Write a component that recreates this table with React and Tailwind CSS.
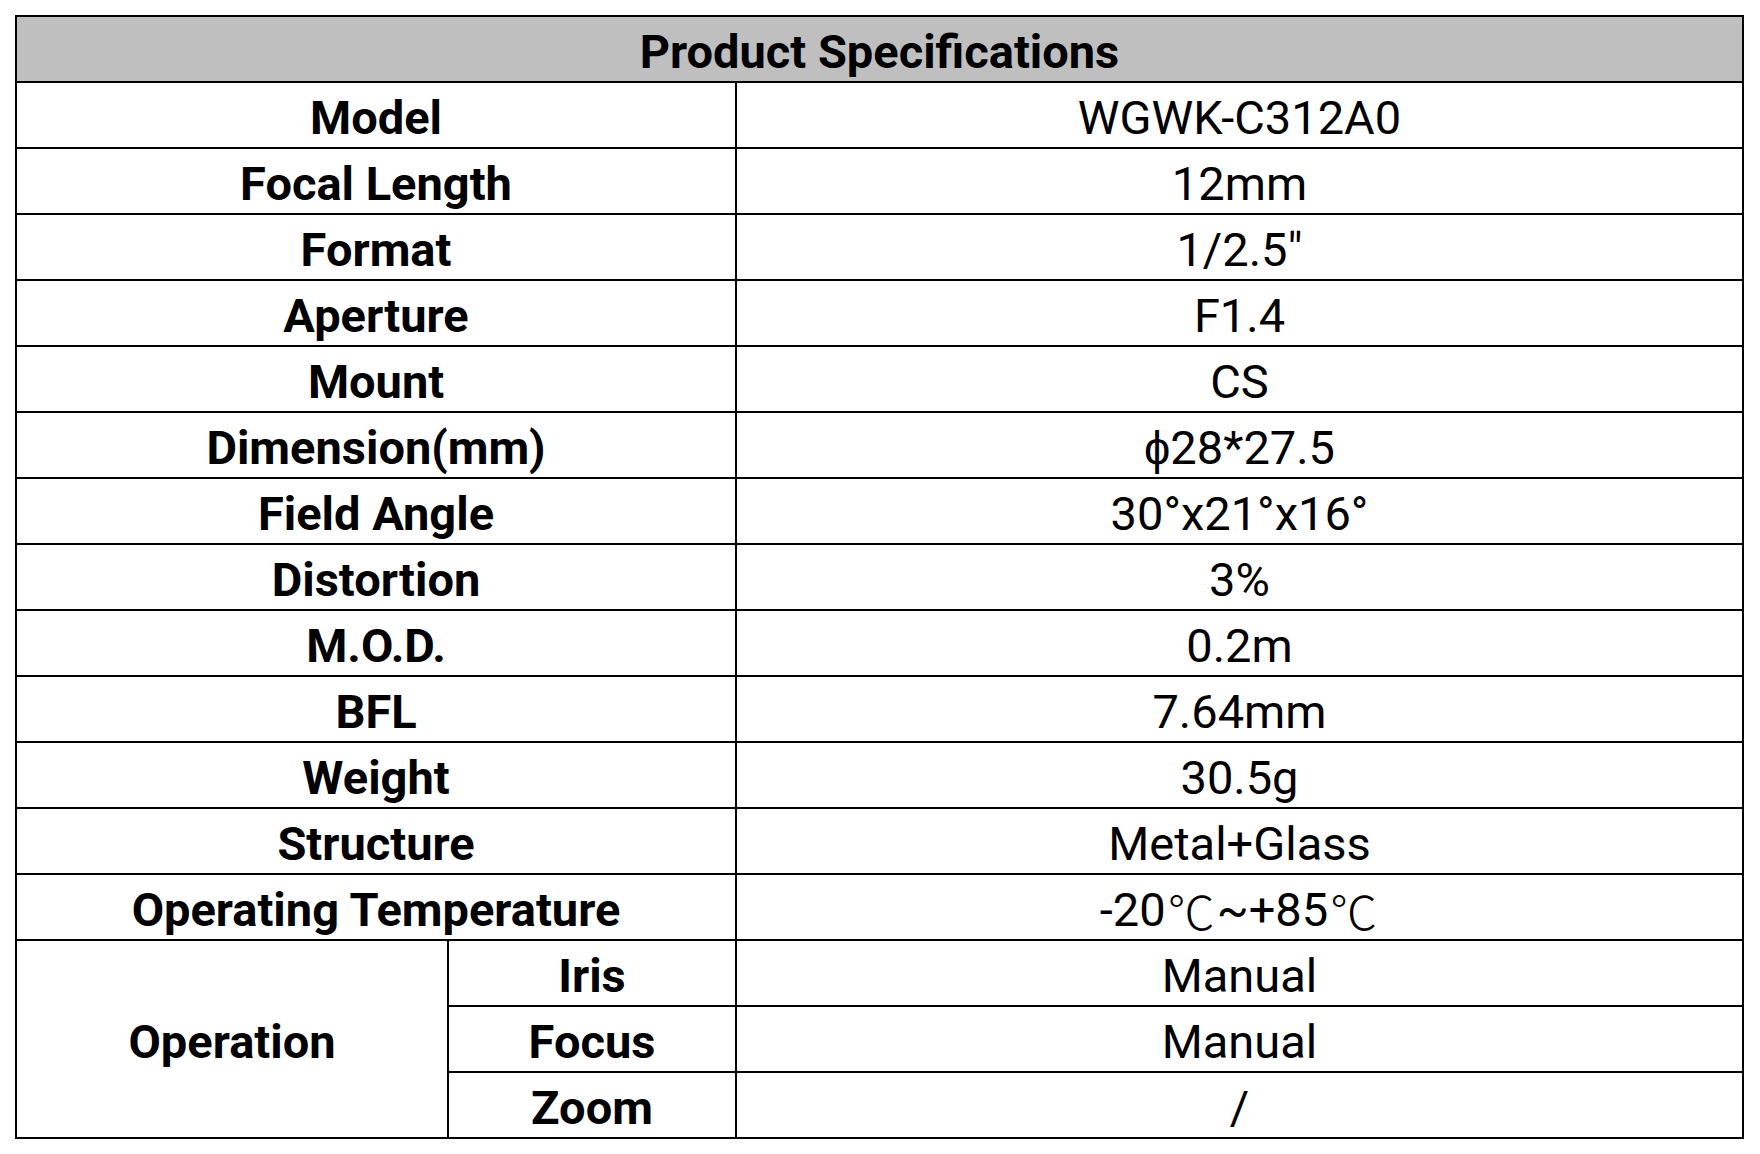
const rows = [
  ['Model', 'WGWK-C312A0'],
  ['Focal Length', '12mm'],
  ['Format', '1/2.5"'],
  ['Aperture', 'F1.4'],
  ['Mount', 'CS'],
  ['Dimension(mm)', 'ϕ28*27.5'],
  ['Field Angle', '30°x21°x16°'],
  ['Distortion', '3%'],
  ['M.O.D.', '0.2m'],
  ['BFL', '7.64mm'],
  ['Weight', '30.5g'],
  ['Structure', 'Metal+Glass'],
];

const ops = [
  ['Iris', 'Manual'],
  ['Focus', 'Manual'],
  ['Zoom', '/'],
];

const font = { fontFamily: 'Roboto, "Noto Sans CJK SC", sans-serif' };

function Deg() {
  return (
    <span className="mx-[2px] font-light" style={{ fontFamily: '"Noto Sans CJK SC", "DejaVu Serif", serif' }}>
      ℃
    </span>
  );
}

export default function App() {
  const cell = 'flex items-center justify-center bg-white pt-[5px]';
  return (
    <div className="min-h-[1154px] w-[1760px] bg-white pt-[15px] pl-[15px]" style={font}>
      <div className="grid w-[1729px] grid-cols-[430px_286px_1005px] auto-rows-[64px] gap-[2px] border-2 border-black bg-black text-[47px] leading-none text-black">
        <div className="col-span-3 flex items-center justify-center bg-[#bfbfbf] pt-[5px] font-bold">Product Specifications</div>
        {rows.map(([k, v]) => (
          <div key={k} className="contents">
            <div className={`col-span-2 font-bold ${cell}`}>{k}</div>
            <div className={cell}>{v}</div>
          </div>
        ))}
        <div className={`col-span-2 font-bold ${cell}`}>Operating Temperature</div>
        <div className={cell}>
          -20<Deg />~+85<Deg />
        </div>
        <div className={`row-span-3 font-bold ${cell}`}>Operation</div>
        {ops.map(([k, v]) => (
          <div key={k} className="contents">
            <div className={`font-bold ${cell}`}>{k}</div>
            <div className={cell}>{v}</div>
          </div>
        ))}
      </div>
    </div>
  );
}
